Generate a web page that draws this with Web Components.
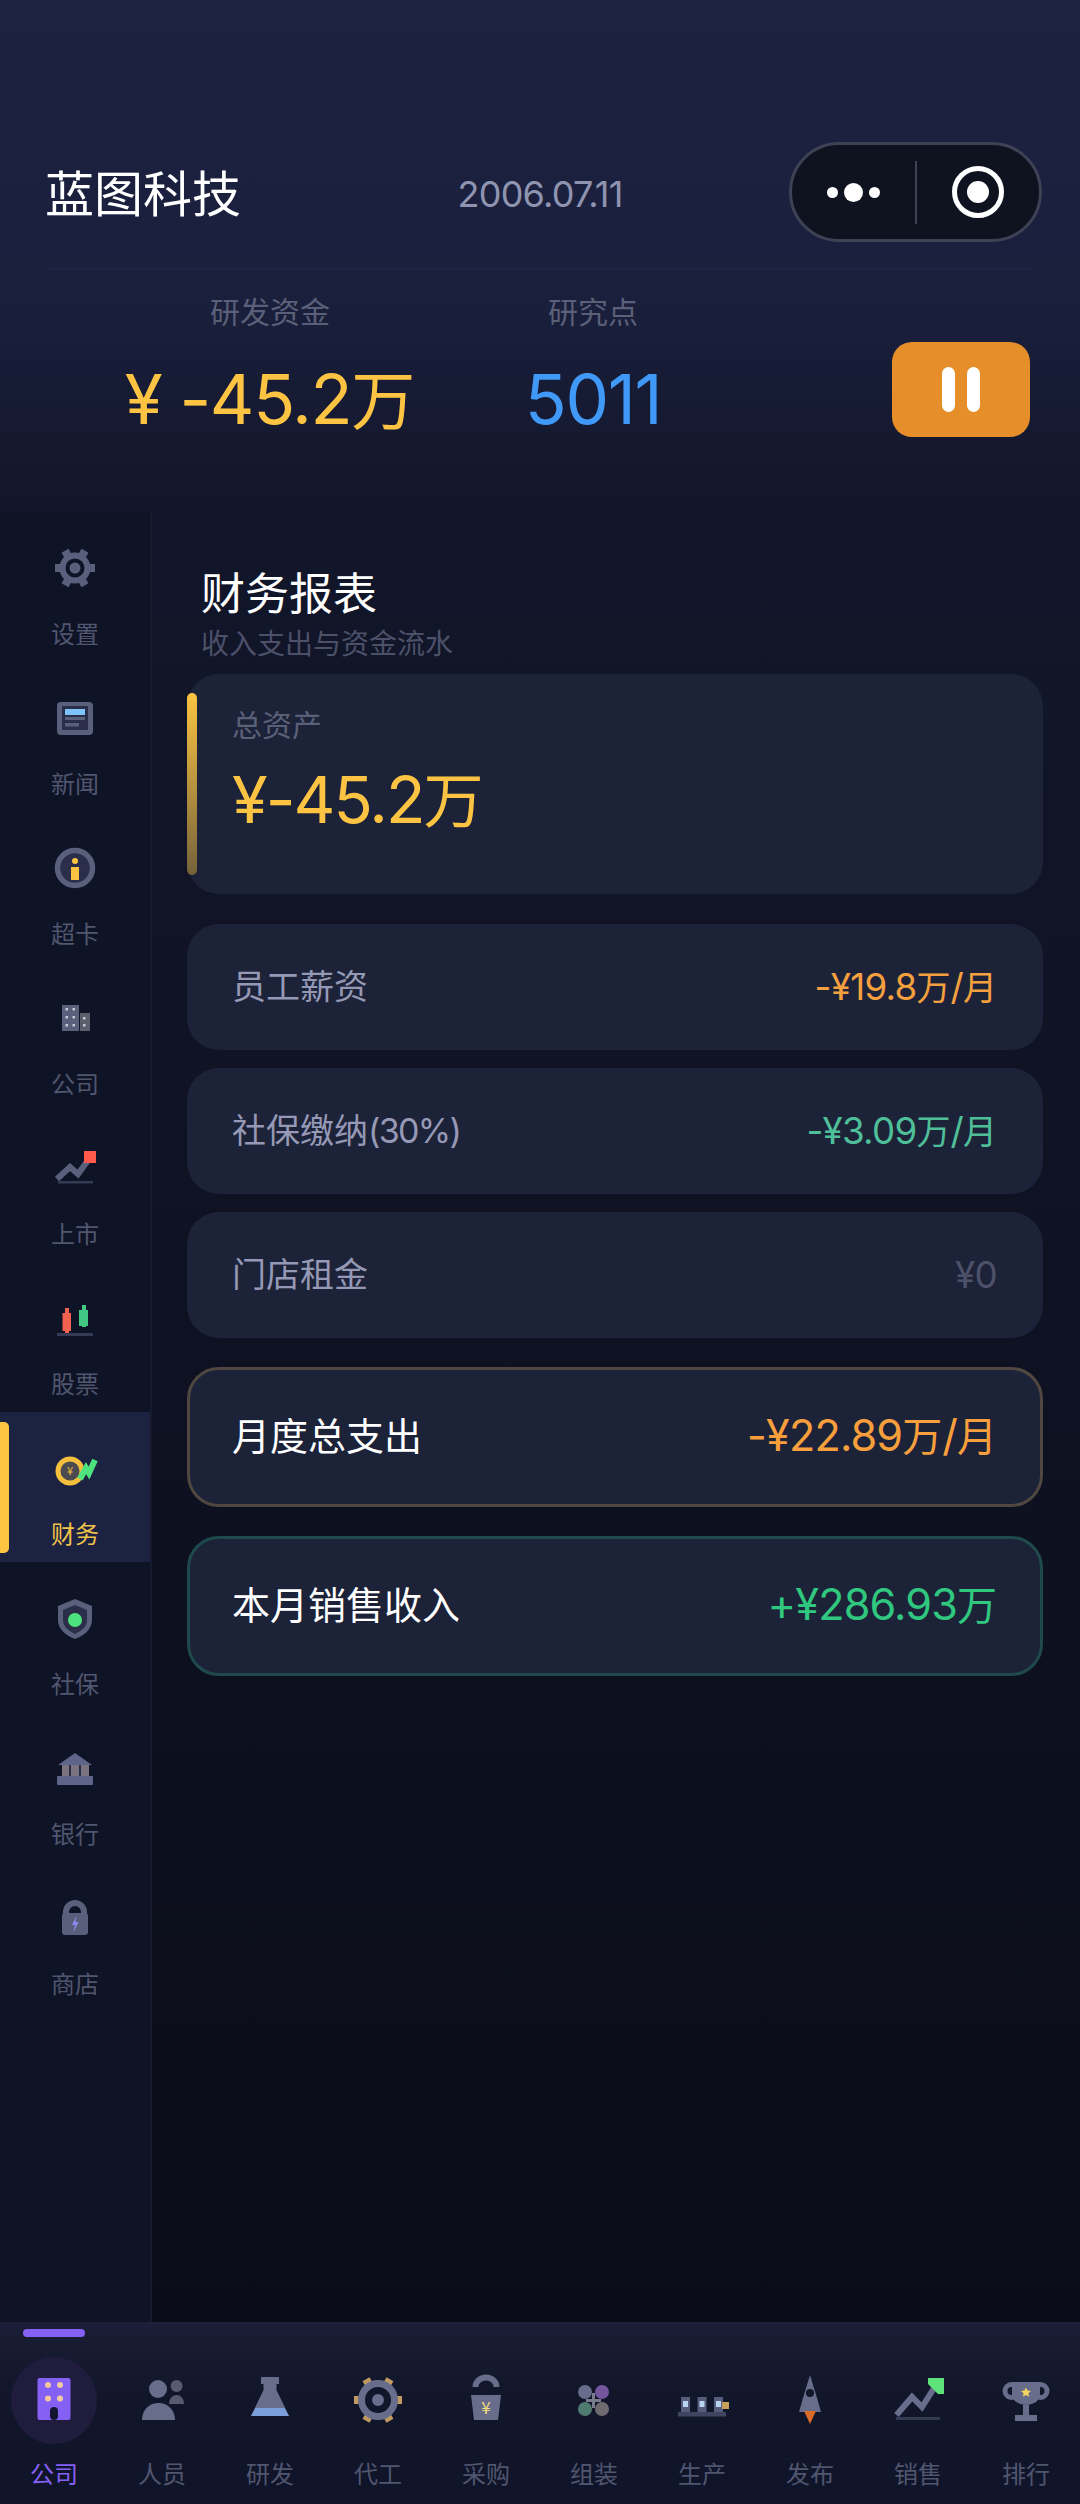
<!DOCTYPE html>
<html lang="zh">
<head>
<meta charset="utf-8">
<title>财务报表</title>
<style>
  html, body { margin: 0; padding: 0; background: #0a0c18; }
  body {
    width: 1080px; height: 2504px; overflow: hidden;
    display: flex; flex-direction: column;
    font-family: Inter, "Noto Sans CJK SC", sans-serif;
  }
  .middle { flex: 1; display: flex; min-height: 0; }
</style>
</head>
<body>
<app-header company="蓝图科技" date="2006.07.11">
  <stat-block label="研发资金" value="¥ -45.2万" color="#fdc443"></stat-block>
  <stat-block label="研究点" value="5011" color="#4099f7"></stat-block>
</app-header>

<div class="middle">
  <side-nav>
    <nav-item icon="gear" label="设置"></nav-item>
    <nav-item icon="news" label="新闻"></nav-item>
    <nav-item icon="info" label="超卡"></nav-item>
    <nav-item icon="office" label="公司"></nav-item>
    <nav-item icon="ipo" label="上市"></nav-item>
    <nav-item icon="candles" label="股票"></nav-item>
    <nav-item icon="coin" label="财务" active></nav-item>
    <nav-item icon="shield" label="社保"></nav-item>
    <nav-item icon="bank" label="银行"></nav-item>
    <nav-item icon="lock" label="商店"></nav-item>
  </side-nav>
  <report-view heading="财务报表" sub="收入支出与资金流水">
    <asset-card label="总资产" value="¥-45.2万"></asset-card>
    <report-row label="员工薪资" value="-¥19.8万/月" color="#f5a03f"></report-row>
    <report-row label="社保缴纳(30%)" value="-¥3.09万/月" color="#4fbf99"></report-row>
    <report-row label="门店租金" value="¥0" color="#4c5169"></report-row>
    <report-row label="月度总支出" value="-¥22.89万/月" color="#f79f3c" edge="#4f4740" strong></report-row>
    <report-row label="本月销售收入" value="+¥286.93万" color="#30c77f" edge="#1f4a4d" strong></report-row>
  </report-view>
</div>

<tab-bar>
  <tab-item icon="t-company" label="公司" active></tab-item>
  <tab-item icon="t-people" label="人员"></tab-item>
  <tab-item icon="t-flask" label="研发"></tab-item>
  <tab-item icon="t-gear" label="代工"></tab-item>
  <tab-item icon="t-bag" label="采购"></tab-item>
  <tab-item icon="t-parts" label="组装"></tab-item>
  <tab-item icon="t-line" label="生产"></tab-item>
  <tab-item icon="t-rocket" label="发布"></tab-item>
  <tab-item icon="t-sales" label="销售"></tab-item>
  <tab-item icon="t-cup" label="排行"></tab-item>
</tab-bar>

<script>
// icons are all drawn on a 48x48 box
const G = '#5a607c';   // sidebar grey
const T = '#676d8b';   // tab grey
const D = '#2a2e48';   // dark fill inside icons
const ICONS = {
  gear: `<g fill="${G}"><rect x="4" y="20" width="40" height="8"/><rect x="4" y="20" width="40" height="8" transform="rotate(60 24 24)"/><rect x="4" y="20" width="40" height="8" transform="rotate(120 24 24)"/><circle cx="24" cy="24" r="15.5"/></g><circle cx="24" cy="24" r="9.5" fill="#0f1326"/><circle cx="24" cy="24" r="5.5" fill="${G}"/>`,
  news: `<rect x="6" y="8" width="36" height="33" rx="4" fill="${G}"/><rect x="11" y="12" width="26" height="24" fill="${D}"/><rect x="14" y="15" width="20" height="6" fill="#7dc4fb"/><rect x="14" y="23" width="20" height="3" fill="${G}"/><rect x="14" y="29" width="14" height="3.5" fill="${G}"/>`,
  info: `<circle cx="24" cy="24" r="17.5" fill="${D}" stroke="${G}" stroke-width="5.5"/><circle cx="24" cy="17" r="3" fill="#fcc441"/><rect x="20" y="23" width="8" height="13" fill="#fcc441"/>`,
  office: `<rect x="11" y="11" width="17" height="26" fill="${G}"/><rect x="29" y="19" width="10" height="18" fill="#5c5f6c"/><g fill="#c5c8d5"><rect x="14.5" y="14" width="2.5" height="2.5"/><rect x="21.5" y="14" width="2.5" height="2.5"/><rect x="14.5" y="22" width="2.5" height="2.5"/><rect x="21.5" y="22" width="2.5" height="2.5"/><rect x="14.5" y="30" width="2.5" height="2.5"/><rect x="21.5" y="30" width="2.5" height="2.5"/><rect x="32" y="23" width="2.5" height="2.5"/><rect x="32" y="30" width="2.5" height="2.5"/></g>`,
  ipo: `<polyline points="6,35 19,23 27,30 38,15" fill="none" stroke="${G}" stroke-width="6"/><rect x="33" y="7" width="12" height="12" fill="#ff5a4c"/><rect x="7" y="37" width="35" height="2.5" fill="#353a55"/>`,
  candles: `<rect x="14" y="14" width="4" height="25" fill="#f0614f"/><rect x="11.5" y="19" width="8.5" height="18" fill="#f0614f"/><rect x="31" y="11" width="4" height="22" fill="#41c983"/><rect x="28" y="16" width="9" height="16" fill="#41c983"/><rect x="6" y="39" width="36" height="3" fill="#353a55"/>`,
  coin: `<circle cx="19" cy="27" r="12" fill="#4a4a50" stroke="#f3bf3c" stroke-width="5"/><text x="19" y="31" font-size="11" text-anchor="middle" fill="#f3bf3c" font-family="Noto Sans CJK SC">¥</text><polyline points="29,35 35,24 38,29 44,16" fill="none" stroke="#4ee27e" stroke-width="6"/>`,
  shield: `<path d="M24 5 L41 12 V26 C41 36 32 42 24 45 C16 42 7 36 7 26 V12Z" fill="${G}"/><path d="M24 11 L36 16 V26 C36 33 30 37 24 40 C18 37 12 33 12 26 V16Z" fill="${D}"/><circle cx="24" cy="26" r="7" fill="#4ee27e"/>`,
  bank: `<path d="M24 9 L41 21 H7Z" fill="#5f6588"/><rect x="11" y="21" width="27" height="11" fill="#7c7380"/><rect x="18" y="21" width="2" height="11" fill="${D}"/><rect x="28" y="21" width="2" height="11" fill="${D}"/><rect x="6" y="32" width="36" height="9" rx="1" fill="#5f6588"/>`,
  lock: `<path d="M15 21 V18 A9 9 0 0 1 33 18 V21" fill="none" stroke="${G}" stroke-width="6"/><rect x="11" y="19" width="26" height="22" rx="3" fill="${G}"/><path d="M25.5 22 L21 31 H24 L22.5 38 L27.5 28 H24.5Z" fill="#8a8cf0"/>`,

  't-company': `<rect x="7.5" y="2" width="33" height="42" rx="2" fill="#8560f5"/><g fill="#f0c9a0"><circle cx="18" cy="9" r="3"/><circle cx="30" cy="9" r="3"/><circle cx="18" cy="22.5" r="3"/><circle cx="30" cy="22.5" r="3"/></g><rect x="20" y="31" width="8" height="13" rx="4" fill="#14152e"/>`,
  't-people': `<circle cx="20" cy="13" r="9" fill="${T}"/><path d="M4 44 C4 33 12 27 20.5 27 C29 27 37 33 37 44Z" fill="${T}"/><circle cx="38.6" cy="10" r="6" fill="#585b70"/><path d="M31 28 C31 22 35 19 39 19 C43 19 46 23 46 28Z" fill="#585b70"/>`,
  't-flask': `<rect x="15" y="1" width="18" height="7" fill="${T}"/><path d="M17.5 7 H30.5 V14 L43 40 H5 L17.5 14Z" fill="${T}"/><path d="M9.5 32 H38.5 L43 40 H5Z" fill="#7c9fdc"/>`,
  't-gear': `<g fill="#c19a5f"><rect x="0" y="20" width="48" height="8"/><rect x="0" y="20" width="48" height="8" transform="rotate(60 24 24)"/><rect x="0" y="20" width="48" height="8" transform="rotate(120 24 24)"/></g><circle cx="24" cy="24" r="16.5" fill="#12162a" stroke="${T}" stroke-width="7"/><circle cx="24" cy="24" r="6" fill="${T}"/>`,
  't-bag': `<path d="M13.5 11 A10.5 9.5 0 0 1 34.5 11" fill="none" stroke="${T}" stroke-width="6"/><path d="M9 19 H39 L36 44 H12Z" fill="${T}"/><text x="24" y="38" font-size="17" text-anchor="middle" fill="#f2dc7a" font-family="Noto Sans CJK SC">¥</text>`,
  't-parts': `<circle cx="15" cy="16" r="7" fill="${T}"/><circle cx="32" cy="16" r="7" fill="#74569f"/><circle cx="15" cy="33" r="7" fill="#4f7a70"/><circle cx="32" cy="33" r="7" fill="#6f6a70"/><path d="M23.5 17 V32 M16 24.5 H31" stroke="#777b8c" stroke-width="3" fill="none"/>`,
  't-line': `<rect x="0" y="36" width="48" height="4.5" fill="#3f4460"/><g fill="#565c7c"><rect x="3" y="21" width="9" height="15"/><rect x="19.5" y="21" width="9" height="15"/><rect x="36" y="21" width="9" height="15"/></g><g fill="#b8d4f0"><rect x="5" y="25" width="5" height="6"/><rect x="21.5" y="25" width="5" height="6"/><rect x="38" y="25" width="5" height="6"/></g><rect x="44" y="26" width="7" height="7" fill="#c8a05a"/>`,
  't-rocket': `<path d="M24 -1 L31 22 L35 36 H13 L17 22Z" fill="${T}"/><circle cx="24" cy="17" r="4" fill="#12162a"/><path d="M18 35 H30 L24 48Z" fill="#d96c2a"/>`,
  't-sales': `<polyline points="2.5,39 18,21 28,31 42,9" fill="none" stroke="${T}" stroke-width="6"/><path d="M34 2 H50 V18 H44 L34 8Z" fill="#5ee27a"/><rect x="2" y="41" width="44" height="3" fill="#353a55"/>`,
  't-cup': `<circle cx="9.5" cy="15" r="6.5" fill="none" stroke="${T}" stroke-width="5"/><circle cx="38.5" cy="15" r="6.5" fill="none" stroke="${T}" stroke-width="5"/><path d="M10 6 H38 V18 C38 25 31 29 24 29 C17 29 10 25 10 18Z" fill="${T}"/><rect x="21" y="29" width="6" height="10" fill="${T}"/><rect x="13" y="39" width="22" height="6" fill="${T}"/><path d="M24 11.5 L25.5 14.6 L29 15 L26.4 17.3 L27.1 20.7 L24 19 L20.9 20.7 L21.6 17.3 L19 15 L22.5 14.6Z" fill="#f7d560"/>`
};

// digits in the reference are taller and tighter than the han text around them
const markLatin = (el, text) => {
  el.innerHTML = text.replace(/[ -~¥]+/g, m => `<span class="l">${m}</span>`);
};

class AppIcon extends HTMLElement {
  static get observedAttributes() { return ['name']; }
  constructor() {
    super();
    this.attachShadow({ mode: 'open' }).innerHTML = `
      <style>
        :host { display: block; width: 48px; height: 48px; }
        svg { display: block; overflow: visible; }
      </style>
      <svg width="48" height="48" viewBox="0 0 48 48"></svg>`;
  }
  attributeChangedCallback(attr, oldVal, newVal) { //name is set by the parent after it builds its shadow
    this.shadowRoot.querySelector('svg').innerHTML = ICONS[newVal] || '';
  }
}

class AppHeader extends HTMLElement {
  constructor() {
    super();
    this.attachShadow({ mode: 'open' }).innerHTML = `
      <style>
        :host { display: block; height: 512px; padding-top: 142px; box-sizing: border-box;
                background: linear-gradient(#1d2242, #1a1f3c 300px, #12162a); }
        .top { display: flex; align-items: center; height: 100px; padding: 0 38px 0 45px; position: relative; }
        .name { font-size: 49px; color: #fff; line-height: 100px; position: relative; top: 3px; }
        .date { position: absolute; left: 0; right: 0; top: 2px; text-align: center; font-size: 36px; color: #8f94b0;
                line-height: 100px; letter-spacing: -.02em; }
        .capsule { margin-left: auto; width: 253px; height: 100px; box-sizing: border-box; border: 3px solid #3d4255;
                   border-radius: 50px; background: #0f121f; display: flex; align-items: center; position: relative; z-index: 1; }
        .capsule .side { flex: 1; display: flex; align-items: center; justify-content: center; }
        .capsule .bar { width: 2px; height: 63px; background: #3d4255; }
        .dots { display: flex; align-items: center; gap: 6px; }
        .dots i { display: block; width: 11px; height: 11px; border-radius: 50%; background: #fff; }
        .dots i:nth-child(2) { width: 19px; height: 19px; }
        .ring { width: 52px; height: 52px; box-sizing: border-box; border: 5px solid #fff; border-radius: 50%;
                display: flex; align-items: center; justify-content: center; }
        .ring i { display: block; width: 22px; height: 22px; border-radius: 50%; background: #fff; }
        hr { border: 0; height: 2px; background: #1e2342; margin: 26px 45px 0; }
        .stats { display: grid; grid-template-columns: 296px 130px 1fr; column-gap: 110px; padding: 22px 50px 0 122px; }
        .pause { justify-self: end; margin-top: 50px; width: 138px; height: 95px; border-radius: 20px; background: #e68e29;
                 display: flex; align-items: center; justify-content: center; gap: 12px; }
        .pause i { display: block; width: 13px; height: 45px; border-radius: 7px; background: #fff; }
      </style>
      <div class="top">
        <div class="name"></div>
        <div class="date"></div>
        <div class="capsule">
          <div class="side"><div class="dots"><i></i><i></i><i></i></div></div>
          <div class="bar"></div>
          <div class="side"><div class="ring"><i></i></div></div>
        </div>
      </div>
      <hr>
      <div class="stats">
        <slot></slot>
        <div class="pause"><i></i><i></i></div>
      </div>`;
  }
  connectedCallback() {
    this.shadowRoot.querySelector('.name').textContent = this.getAttribute('company');
    this.shadowRoot.querySelector('.date').textContent = this.getAttribute('date');
  }
}

class StatBlock extends HTMLElement {
  constructor() {
    super();
    this.attachShadow({ mode: 'open' }).innerHTML = `
      <style>
        :host { display: flex; flex-direction: column; align-items: center; white-space: pre; }
        .label { font-size: 30px; line-height: 40px; color: #5b6079; }
        .value { font-size: 64px; line-height: 80px; margin-top: 27px; }
        .l { font-size: 1.08em; letter-spacing: -.02em; }
      </style>
      <div class="label"></div>
      <div class="value"></div>`;
  }
  connectedCallback() {
    this.shadowRoot.querySelector('.label').textContent = this.getAttribute('label');
    const v = this.shadowRoot.querySelector('.value');
    markLatin(v, this.getAttribute('value'));
    v.style.color = this.getAttribute('color');
  }
}

class SideNav extends HTMLElement {
  constructor() {
    super();
    this.attachShadow({ mode: 'open' }).innerHTML = `
      <style>
        :host { display: block; width: 152px; flex: none; box-sizing: border-box; border-right: 2px solid #161a2c;
                background: #0f1326; }
      </style>
      <slot></slot>`;
  }
}

class NavItem extends HTMLElement {
  constructor() {
    super();
    this.attachShadow({ mode: 'open' }).innerHTML = `
      <style>
        :host { display: flex; flex-direction: column; align-items: center; height: 150px; padding-top: 32px;
                box-sizing: border-box; position: relative; }
        :host([active]) { background: #1c2342; }
        :host([active])::before { content: ""; position: absolute; left: 0; top: 10px; bottom: 9px; width: 9px;
                border-radius: 0 5px 5px 0; background: #fcc441; }
        .label { font-size: 24px; line-height: 30px; margin-top: 28px; color: #50566f; }
        :host([active]) .label { color: #f0c24a; }
      </style>
      <app-icon></app-icon>
      <div class="label"></div>`;
  }
  connectedCallback() {
    this.shadowRoot.querySelector('app-icon').setAttribute('name', this.getAttribute('icon'));
    this.shadowRoot.querySelector('.label').textContent = this.getAttribute('label');
  }
}

class ReportView extends HTMLElement {
  constructor() {
    super();
    this.attachShadow({ mode: 'open' }).innerHTML = `
      <style>
        :host { display: block; flex: 1; box-sizing: border-box; padding: 54px 37px 0 35px;
                background: linear-gradient(#12162a, #0a0c18); }
        h1 { margin: 0 0 0 14px; font-size: 44px; line-height: 56px; font-weight: 400; color: #fff; }
        p { margin: 5px 0 13px 14px; font-size: 28px; line-height: 34px; color: #4c5169; }
        .list { display: flex; flex-direction: column; gap: 18px; }
      </style>
      <h1></h1>
      <p></p>
      <div class="list"><slot></slot></div>`;
  }
  connectedCallback() {
    this.shadowRoot.querySelector('h1').textContent = this.getAttribute('heading');
    this.shadowRoot.querySelector('p').textContent = this.getAttribute('sub');
  }
}

class AssetCard extends HTMLElement {
  constructor() {
    super();
    this.attachShadow({ mode: 'open' }).innerHTML = `
      <style>
        :host { display: block; height: 220px; margin-bottom: 12px; box-sizing: border-box; padding: 31px 45px 0;
                border-radius: 32px; background: #1c2238; position: relative; }
        :host::before { content: ""; position: absolute; left: 0; top: 19px; bottom: 19px; width: 10px; border-radius: 5px;
                background: linear-gradient(#fcc441, rgba(252, 196, 65, .4)); }
        .label { font-size: 30px; line-height: 40px; color: #5b6079; }
        .value { font-size: 60px; line-height: 80px; margin-top: 15px; color: #fdc443; }
        .l { font-size: 1.08em; letter-spacing: -.03em; }
      </style>
      <div class="label"></div>
      <div class="value"></div>`;
  }
  connectedCallback() {
    this.shadowRoot.querySelector('.label').textContent = this.getAttribute('label');
    markLatin(this.shadowRoot.querySelector('.value'), this.getAttribute('value'));
  }
}

class ReportRow extends HTMLElement {
  constructor() {
    super();
    this.attachShadow({ mode: 'open' }).innerHTML = `
      <style>
        :host { display: flex; align-items: center; justify-content: space-between; height: 126px; box-sizing: border-box;
                padding: 0 46px 0 45px; border-radius: 32px; background: #1c2238; }
        :host([edge]) { height: 140px; border: 3px solid; padding: 0 43px 2px 42px; margin-top: 11px; }
        .label { font-size: 34px; line-height: 50px; color: #9599b5; }
        .label .l { letter-spacing: -.05em; }
        .value { font-size: 34px; line-height: 50px; }
        .value .l { font-size: 1.08em; letter-spacing: -.02em; }
        :host([strong]) .label { font-size: 38px; color: #fff; }
        :host([strong]) .value { font-size: 40px; }
      </style>
      <div class="label"></div>
      <div class="value"></div>`;
  }
  connectedCallback() {
    markLatin(this.shadowRoot.querySelector('.label'), this.getAttribute('label'));
    const v = this.shadowRoot.querySelector('.value');
    markLatin(v, this.getAttribute('value'));
    v.style.color = this.getAttribute('color');
    if (this.hasAttribute('edge')) this.style.borderColor = this.getAttribute('edge');
  }
}

class TabBar extends HTMLElement {
  constructor() {
    super();
    this.attachShadow({ mode: 'open' }).innerHTML = `
      <style>
        :host { display: grid; grid-template-columns: repeat(10, 108px); height: 182px; flex: none; box-sizing: border-box;
                border-top: 2px solid #1c2038; background: linear-gradient(#1a1e36, #12162a 70px, #10142a); }
      </style>
      <slot></slot>`;
  }
}

class TabItem extends HTMLElement {
  constructor() {
    super();
    this.attachShadow({ mode: 'open' }).innerHTML = `
      <style>
        :host { display: flex; flex-direction: column; align-items: center; padding-top: 52px; box-sizing: border-box;
                position: relative; }
        :host([active])::before { content: ""; position: absolute; left: 23px; top: 5px; width: 62px; height: 8px;
                border-radius: 4px; background: #8560f5; }
        :host([active])::after { content: ""; position: absolute; left: 11px; top: 33px; width: 86px; height: 87px;
                border-radius: 50%; background: #201c3e; }
        app-icon { position: relative; z-index: 1; }
        .label { font-size: 24px; line-height: 30px; margin-top: 36px; color: #50566f; }
        :host([active]) .label { color: #8560f5; }
      </style>
      <app-icon></app-icon>
      <div class="label"></div>`;
  }
  connectedCallback() {
    this.shadowRoot.querySelector('app-icon').setAttribute('name', this.getAttribute('icon'));
    this.shadowRoot.querySelector('.label').textContent = this.getAttribute('label');
  }
}

customElements.define('app-icon', AppIcon);
customElements.define('app-header', AppHeader);
customElements.define('stat-block', StatBlock);
customElements.define('side-nav', SideNav);
customElements.define('nav-item', NavItem);
customElements.define('report-view', ReportView);
customElements.define('asset-card', AssetCard);
customElements.define('report-row', ReportRow);
customElements.define('tab-bar', TabBar);
customElements.define('tab-item', TabItem);
</script>
</body>
</html>
